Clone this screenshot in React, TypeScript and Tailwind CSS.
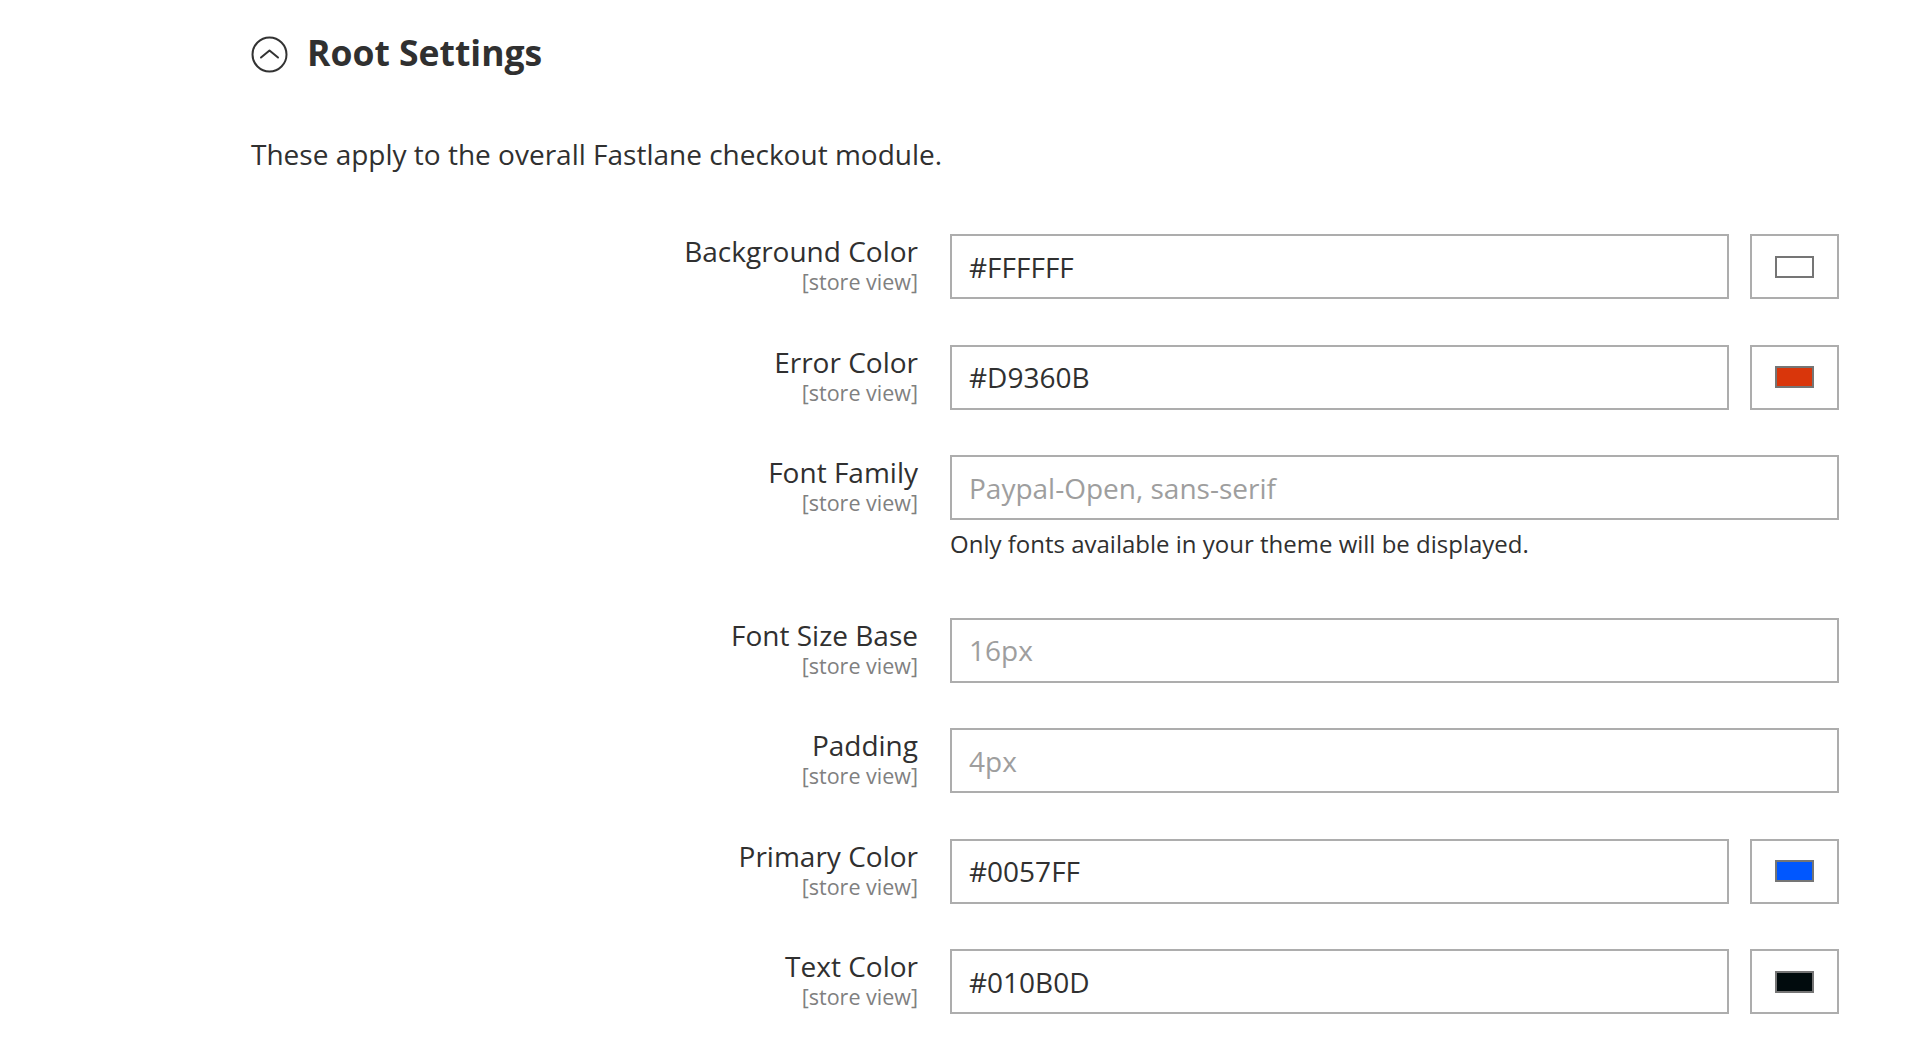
const font = { fontFamily: '"Open Sans", "Noto Sans", Arial, sans-serif' }

type Row = {
    label: string
    value?: string
    placeholder?: string
    swatch?: string
    hint?: string
}

const rows: Row[] = [
    { label: "Background Color", value: "#FFFFFF", swatch: "#FFFFFF" },
    { label: "Error Color", value: "#D9360B", swatch: "#D9360B" },
    {
        label: "Font Family",
        placeholder: "Paypal-Open, sans-serif",
        hint: "Only fonts available in your theme will be displayed.",
    },
    { label: "Font Size Base", placeholder: "16px" },
    { label: "Padding", placeholder: "4px" },
    { label: "Primary Color", value: "#0057FF", swatch: "#0057FF" },
    { label: "Text Color", value: "#010B0D", swatch: "#010B0D" },
]

function ChevronCircle() {
    return (
        <svg width="37" height="37" viewBox="0 0 37 37" fill="none" className="mt-[11px] shrink-0">
            <circle cx="18.5" cy="18.5" r="17" stroke="#333333" strokeWidth="2" />
            <path d="M10 21.5 L18.5 14.5 L27 21.5" stroke="#333333" strokeWidth="2" strokeLinecap="round" strokeLinejoin="round" />
        </svg>
    )
}

function FieldRow({ row }: { row: Row }) {
    return (
        <div className={`flex ${row.hint ? "pb-[12px]" : ""}`}>
            {/* label column */}
            <div className="w-[667px] shrink-0 text-right">
                <div className="text-[28px] leading-[34px] text-[#303030]">{row.label}</div>
                <div className="text-[21.5px] leading-[28px] text-[#808080]">[store view]</div>
            </div>

            <div className="ml-[32px] flex-1">
                <div className="flex gap-[21px]">
                    <input
                        readOnly
                        defaultValue={row.value}
                        placeholder={row.placeholder}
                        className="h-[65px] min-w-0 flex-1 border-2 border-[#adadad] bg-white px-[17px] text-[28px] text-[#303030] outline-none placeholder:text-[#9e9e9e]"
                        style={font}
                    />
                    {row.swatch && (
                        <div className="flex h-[65px] w-[89px] shrink-0 items-center justify-center border-2 border-[#adadad] bg-white">
                            <div className="h-[22px] w-[39px] border-2 border-[#757575]" style={{ backgroundColor: row.swatch }} />
                        </div>
                    )}
                </div>
                {row.hint && (
                    <div className="mt-[8px] text-[24px] leading-[32px] text-[#303030]">{row.hint}</div>
                )}
            </div>
        </div>
    )
}

export default function App() {
    return (
        <div className="min-h-screen w-full bg-white pl-[251px] pr-[73px]" style={font}>
            {/* Section heading */}
            <div className="flex items-start pt-[25px]">
                <ChevronCircle />
                <h2 className="ml-[19px] mt-[2.5px] text-[35.5px] font-bold leading-[48px] text-[#303030]">Root Settings</h2>
            </div>

            <p className="mt-[59.5px] text-[28px] leading-[38px] text-[#303030]">
                These apply to the overall Fastlane checkout module.
            </p>

            {/* Fields */}
            <div className="mt-[61px] flex flex-col gap-[45.5px]">
                {rows.map((r) => (
                    <FieldRow key={r.label} row={r} />
                ))}
            </div>
        </div>
    )
}
